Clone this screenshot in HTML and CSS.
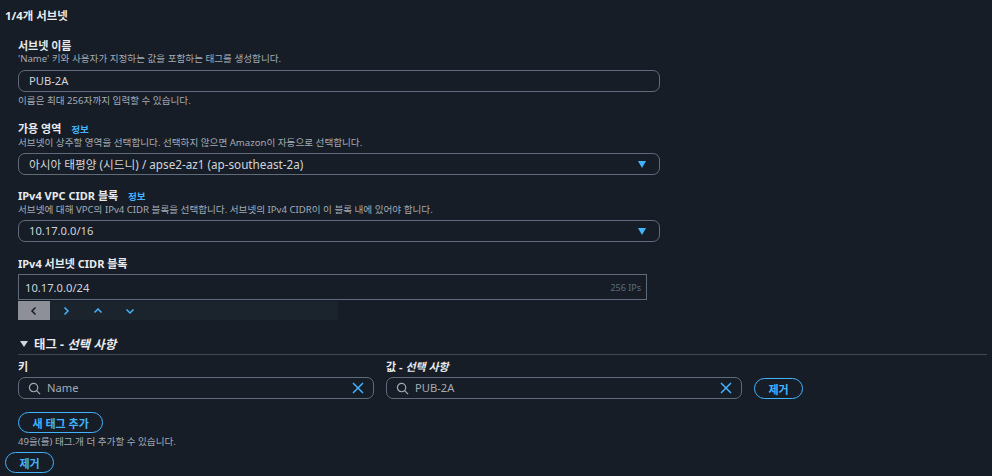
FILE: index.html

```html
<!DOCTYPE html>
<html lang="ko">
<head>
  <meta charset="UTF-8" />
  <title>서브넷 생성</title>
  <link rel="stylesheet" href="styles.css">
</head>
<body>
  <h2 class="count">1/4개 서브넷</h2>
  <div class="form">
    <div class="field name-field">
      <div class="label">서브넷 이름</div>
      <div class="desc">'Name' 키와 사용자가 지정하는 값을 포함하는 태그를 생성합니다.</div>
      <div class="input">PUB-2A</div>
      <div class="desc hint">이름은 최대 256자까지 입력할 수 있습니다.</div>
    </div>
    <div class="field az-field">
      <div class="label">가용 영역 <a class="info">정보</a></div>
      <div class="desc">서브넷이 상주할 영역을 선택합니다. 선택하지 않으면 Amazon이 자동으로 선택합니다.</div>
      <div class="input select az-select">아시아 태평양 (시드니) / apse2-az1 (ap-southeast-2a)<span class="caret"></span></div>
    </div>
    <div class="field vpc-field">
      <div class="label">IPv4 VPC CIDR 블록 <a class="info">정보</a></div>
      <div class="desc">서브넷에 대해 VPC의 IPv4 CIDR 블록을 선택합니다. 서브넷의 IPv4 CIDR이 이 블록 내에 있어야 합니다.</div>
      <div class="input select">10.17.0.0/16<span class="caret"></span></div>
    </div>
    <div class="field cidr-field">
      <div class="label">IPv4 서브넷 CIDR 블록</div>
      <div class="cidr-input"><span>10.17.0.0/24</span><span class="ips">256 IPs</span></div>
      <div class="stepper">
        <button class="step active"><svg viewBox="0 0 12 12"><path d="M7.5 2.5 4 6l3.500 3.500"/></svg></button>
        <button class="step"><svg viewBox="0 0 12 12"><path d="M4.500 2.500 8 6 4.500 9.500"/></svg></button>
        <button class="step"><svg viewBox="0 0 12 12"><path d="M2.500 7.500 6 4l3.500 3.500"/></svg></button>
        <button class="step"><svg viewBox="0 0 12 12"><path d="M2.500 4.500 6 8l3.500-3.500"/></svg></button>
      </div>
    </div>
    <div class="tags">
      <div class="tags-head"><span class="tri"></span><span>태그 - <em>선택 사항</em></span></div>
      <div class="tag-row">
        <div class="tag-col">
          <div class="label">키</div>
          <div class="input search">
            <svg class="mag" viewBox="0 0 14 14"><circle cx="6" cy="6" r="4.500"/><path d="m9.300 9.300 3.700 3.700"/></svg>
            <span>Name</span>
            <svg class="clear" viewBox="0 0 12 12"><path d="m1 1 10 10M11 1 1 11"/></svg>
          </div>
        </div>
        <div class="tag-col">
          <div class="label">값 - <em>선택 사항</em></div>
          <div class="input search">
            <svg class="mag" viewBox="0 0 14 14"><circle cx="6" cy="6" r="4.500"/><path d="m9.300 9.300 3.700 3.700"/></svg>
            <span>PUB-2A</span>
            <svg class="clear" viewBox="0 0 12 12"><path d="m1 1 10 10M11 1 1 11"/></svg>
          </div>
        </div>
        <button class="btn">제거</button>
      </div>
      <button class="btn add-btn">새 태그 추가</button>
      <div class="desc tag-hint">49을(를) 태그.개 더 추가할 수 있습니다.</div>
    </div>
  </div>
  <button class="btn remove-btn">제거</button>
</body>
</html>
```

FILE: styles.css

```css
body {
  margin: 0;
  height: 476px;
  overflow: hidden;
  background-color: #161d26;
  color: #d1d5db;
  font-family: "Noto Sans", "Noto Sans CJK KR", sans-serif;
  font-size: 11.2px;
}
.count {
  margin: 0;
  padding: 8px 0 0 5px;
  height: 28px;
  box-sizing: border-box;
  font-size: 11.4px;
  line-height: 15px;
  font-weight: 700;
  color: #e8eaed;
}
.form {
  padding: 0 5px 0 18px;
}
.field {
  width: 642px;
}
.name-field {
  padding-top: 10px;
}
.az-field {
  padding-top: 14px;
}
.vpc-field {
  padding-top: 13px;
}
.cidr-field {
  padding-top: 14px;
}
.label {
  font-size: 11px;
  line-height: 15px;
  font-weight: 700;
  color: #e8eaed;
}
.label em,
.tags-head em {
  font-style: italic;
}
.info {
  margin-left: 7px;
  font-size: 9.6px;
  color: #42b4ff;
}
.desc {
  font-size: 9.6px;
  line-height: 12px;
  color: #a4abb5;
}
.hint {
  margin-top: 3px;
}
.input {
  display: flex;
  align-items: center;
  height: 22px;
  box-sizing: border-box;
  margin-top: 5px;
  padding: 0 10px;
  border: 1px solid #5f6b7a;
  border-radius: 7px;
  line-height: 20px;
}
.select {
  justify-content: space-between;
  margin-top: 4px;
}
.az-select {
  font-size: 11.7px;
}
.caret {
  width: 0;
  height: 0;
  margin-right: 3px;
  border-left: 4.500px solid transparent;
  border-right: 4.500px solid transparent;
  border-top: 7px solid #42b4ff;
}
.cidr-input {
  display: flex;
  justify-content: space-between;
  align-items: center;
  width: 629px;
  height: 26px;
  box-sizing: border-box;
  margin-top: 3px;
  padding: 0 5px 0 6px;
  border: 1px solid #5f6b7a;
}
.ips {
  font-size: 9px;
  color: #5f6b7a;
}
.stepper {
  display: flex;
  width: 320px;
  height: 19px;
  margin-top: 1px;
  background-color: #1b232d;
}
.step {
  display: flex;
  align-items: center;
  justify-content: center;
  width: 32px;
  padding: 0;
  border: none;
  background: none;
}
.step svg {
  width: 12px;
  height: 12px;
  fill: none;
  stroke: #42b4ff;
  stroke-width: 1.500;
}
.step.active {
  background-color: #8d8f99;
}
.step.active svg {
  stroke: #161d26;
}
.tags {
  margin-top: 14px;
}
.tags-head {
  display: flex;
  align-items: center;
  gap: 3px;
  height: 20px;
  border-bottom: 1px solid #424650;
  font-size: 12.4px;
  font-weight: 700;
  color: #e8eaed;
  white-space: pre;
}
.tri {
  width: 0;
  height: 0;
  margin: 0 3px 0 2px;
  border-left: 4px solid transparent;
  border-right: 4px solid transparent;
  border-top: 6px solid #d1d5db;
}
.tag-row {
  display: flex;
  align-items: flex-end;
  gap: 12.500px;
  margin-top: 4px;
}
.tag-col {
  width: 355.500px;
}
.tag-col .input {
  margin-top: 3px;
}
.search {
  gap: 6px;
  padding: 0 8px;
  color: #a4abb5;
}
.mag {
  width: 13px;
  height: 13px;
  margin-left: 1px;
  fill: none;
  stroke: #a4abb5;
  stroke-width: 1.300;
}
.clear {
  width: 12px;
  height: 12px;
  margin-left: auto;
  margin-right: 1px;
  fill: none;
  stroke: #42b4ff;
  stroke-width: 1.500;
}
.btn {
  height: 21px;
  padding: 0 13.500px;
  border: 1px solid #42b4ff;
  border-radius: 11px;
  background: none;
  color: #42b4ff;
  font-family: inherit;
  font-size: 11px;
  font-weight: 700;
}
.add-btn {
  display: block;
  margin-top: 13px;
}
.tag-hint {
  margin-top: 3px;
}
.remove-btn {
  display: block;
  margin: 4px 0 0 5px;
}
```
